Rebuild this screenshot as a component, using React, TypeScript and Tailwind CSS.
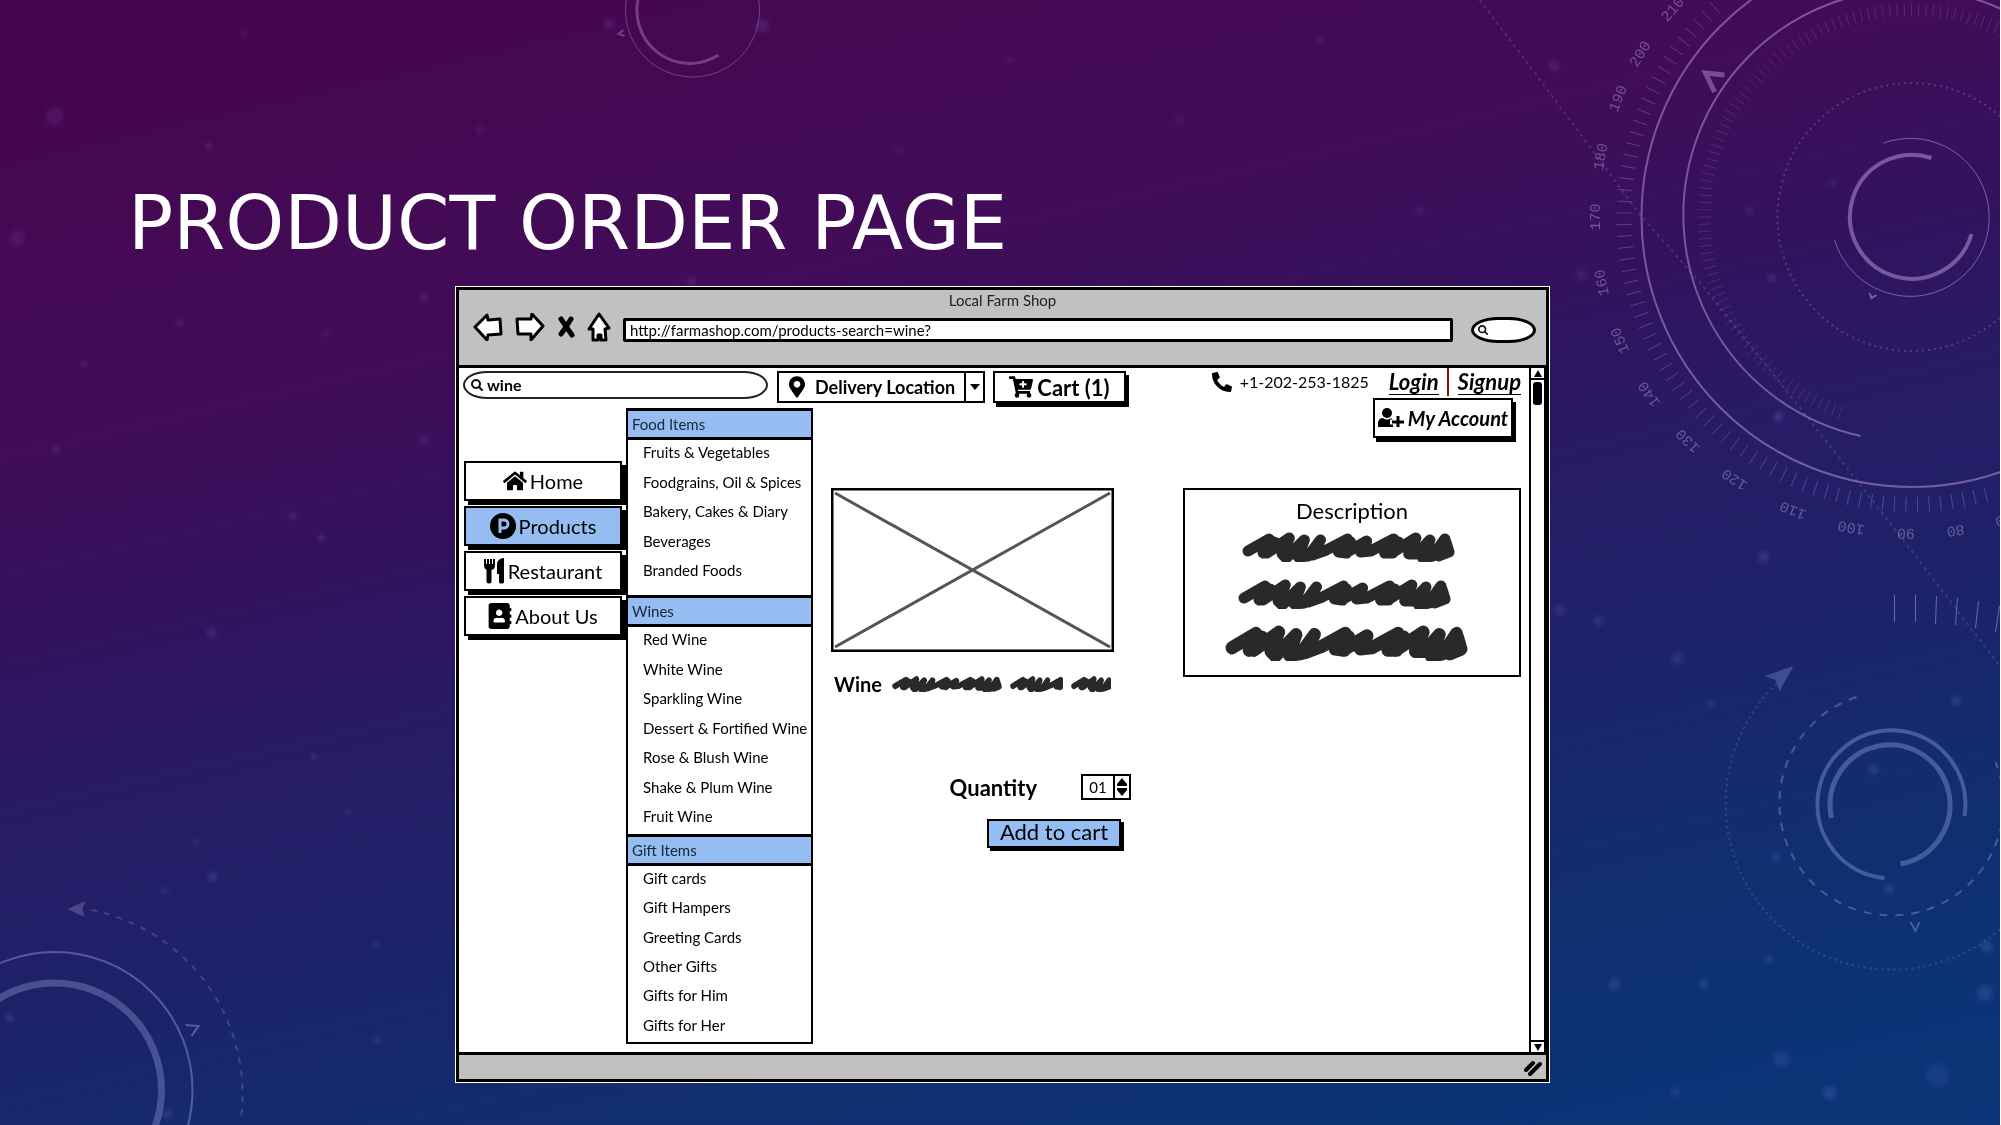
import type { ReactNode } from 'react';
import { FaAddressBook, FaCartPlus, FaHome, FaMapMarkerAlt, FaPhoneAlt } from 'react-icons/fa';

interface MenuSection {
  title: string;
  items: string[];
  listClass: string;
}

const MENU: MenuSection[] = [
  {
    title: 'Food Items',
    items: ['Fruits & Vegetables', 'Foodgrains, Oil & Spices', 'Bakery, Cakes & Diary', 'Beverages', 'Branded Foods'],
    listClass: 'h-[148px] mb-[7px]',
  },
  {
    title: 'Wines',
    items: ['Red Wine', 'White Wine', 'Sparkling Wine', 'Dessert & Fortified Wine', 'Rose & Blush Wine', 'Shake & Plum Wine', 'Fruit Wine'],
    listClass: 'h-[207px]',
  },
  {
    title: 'Gift Items',
    items: ['Gift cards', 'Gift Hampers', 'Greeting Cards', 'Other Gifts', 'Gifts for Him', 'Gifts for Her'],
    listClass: 'h-[176px]',
  },
];

// label + angle on the big dial
const DIAL_LABELS: [string, number][] = [
  ['210', 221], ['200', 211], ['190', 202], ['180', 191], ['170', 180], ['160', 168], ['150', 157],
  ['140', 146], ['130', 135], ['120', 124], ['110', 112], ['100', 101], ['90', 91], ['80', 82], ['70', 73],
];

// x, y, radius, opacity
const STARS: [number, number, number, number][] = [
  [55, 116, 9, 0.1], [18, 238, 8, 0.1], [244, 33, 3, 0.14], [210, 146, 4, 0.14], [180, 323, 3, 0.18],
  [84, 364, 3, 0.16], [327, 333, 3, 0.14], [425, 298, 4, 0.14], [425, 440, 5, 0.12], [293, 516, 3, 0.22],
  [322, 538, 3, 0.24], [212, 633, 5, 0.14], [314, 757, 3, 0.18], [348, 812, 3, 0.14], [196, 842, 3, 0.16],
  [213, 877, 5, 0.16], [376, 945, 3, 0.16], [378, 1041, 3, 0.2], [165, 891, 4, 0.12], [10, 1018, 4, 0.18],
  [168, 1114, 5, 0.16], [57, 450, 4, 0.12], [610, 24, 5, 0.14], [763, 26, 7, 0.14], [692, 282, 4, 0.16],
  [1010, 60, 4, 0.1], [1180, 120, 5, 0.08], [1320, 40, 4, 0.12], [1555, 66, 5, 0.14], [1750, 210, 4, 0.14],
  [1772, 278, 4, 0.18], [1833, 182, 4, 0.1], [1779, 417, 5, 0.22], [1582, 275, 6, 0.1], [1764, 557, 6, 0.16],
  [1678, 659, 6, 0.14], [1711, 703, 4, 0.14], [1560, 610, 6, 0.12], [1599, 621, 5, 0.14], [1957, 701, 5, 0.16],
  [1874, 770, 5, 0.18], [1776, 858, 5, 0.14], [1890, 889, 5, 0.18], [1987, 946, 6, 0.18], [1770, 959, 4, 0.16],
  [1615, 984, 6, 0.16], [1704, 984, 5, 0.16], [1782, 1059, 8, 0.14], [1830, 1093, 7, 0.16], [1938, 1075, 12, 0.1],
  [1985, 993, 8, 0.16], [1676, 1092, 4, 0.16], [900, 150, 5, 0.08], [480, 130, 4, 0.1], [1420, 210, 5, 0.08],
];

function polar(cx: number, cy: number, r: number, deg: number) {
  const a = (deg * Math.PI) / 180;
  return [cx + r * Math.cos(a), cy + r * Math.sin(a)];
}

function Ticks({ r1, r2, from, to, step }: { r1: number; r2: number; from: number; to: number; step: number }) {
  const count = Math.floor((to - from) / step) + 1;
  return (
    <>
      {Array.from({ length: count }, (_, i) => {
        const [x1, y1] = polar(1912, 217, r1, from + i * step);
        const [x2, y2] = polar(1912, 217, r2, from + i * step);
        return <line key={i} x1={x1} y1={y1} x2={x2} y2={y2} />;
      })}
    </>
  );
}

function Backdrop() {
  return (
    <svg
      className="absolute inset-0 w-full h-full"
      viewBox="0 0 2001 1125"
      preserveAspectRatio="xMidYMid slice"
      fill="none"
      aria-hidden="true"
    >
      <defs>
        <filter id="soft" x="-100%" y="-100%" width="300%" height="300%">
          <feGaussianBlur stdDeviation="2" />
        </filter>
      </defs>
      {STARS.map(([x, y, r, o]) => (
        <circle key={`${x}-${y}`} cx={x} cy={y} r={r} fill="#8f8bf0" opacity={o} filter="url(#soft)" />
      ))}

      {/* top centre */}
      <g stroke="#c08bd0" opacity="0.4">
        <circle cx="693" cy="10" r="67" strokeWidth="1" />
        <path d="M640 -6A53 53 0 0 0 719 55" strokeWidth="3" />
        <path d="M624 30L619 34L625 36" strokeWidth="2" />
      </g>

      {/* top right dial */}
      <g stroke="#b48fd6">
        <circle cx="1912" cy="217" r="270" strokeWidth="2" opacity="0.55" />
        <path d="M1861 436A226 226 0 1 1 2020 18" strokeWidth="2" opacity="0.55" />
        <g strokeWidth="1" opacity="0.35">
          <Ticks r1={280} r2={295} from={75} to={228} step={2.3} />
        </g>
        <g strokeWidth="1" opacity="0.2">
          <Ticks r1={201} r2={214} from={110} to={300} step={2} />
        </g>
        <circle cx="1912" cy="217" r="134" strokeWidth="2" strokeDasharray="2 4" opacity="0.3" />
        <path d="M1932 158A62 62 0 1 0 1972 234" strokeWidth="4" opacity="0.55" />
        <path d="M1884 143A79 79 0 1 1 1835 240" strokeWidth="1" opacity="0.6" />
        <path d="M1725 75L1706 73L1715 92" strokeWidth="5" opacity="0.5" />
        <path d="M1870 293L1872 298L1877 295" strokeWidth="2" opacity="0.6" />
        <path d="M1480 0L1540 79L1640 214L1700 282L1807 416L1917 557L2001 667" strokeWidth="2" strokeDasharray="3 4" opacity="0.22" />
        <path d="M1895 595v27M1916 595v27M1937 596l-1 28M1958 598l-2 27M1979 601l-3 27M2000 606l-4 26" strokeWidth="1" opacity="0.6" />
      </g>
      <g fill="#b7a4dd" opacity="0.45" fontFamily="'Liberation Mono', monospace" fontSize="15" textAnchor="middle">
        {DIAL_LABELS.map(([label, deg]) => {
          const [x, y] = polar(1912, 217, 312, deg);
          return (
            <text key={label} transform={`translate(${x} ${y}) rotate(${deg + 90})`}>
              {label}
            </text>
          );
        })}
      </g>

      {/* bottom right */}
      <g stroke="#8fa3dc" opacity="0.4">
        <path d="M1965 816A74 74 0 1 0 1885 878" strokeWidth="4" />
        <path d="M1832 818A60 60 0 1 1 1901 864" strokeWidth="5" />
        <path d="M1857 697A112 112 0 1 0 1996 762" strokeWidth="2" strokeDasharray="8 8" />
        <path d="M1777 684A166 166 0 1 0 2040 879" strokeWidth="2" strokeDasharray="2 4" opacity="0.6" />
        <path d="M1911 922L1916 931L1920 922" strokeWidth="2" />
        <path d="M1794 666L1765 676L1776 680L1780 691Z" fill="#8fa3dc" stroke="none" opacity="0.8" />
      </g>

      {/* bottom left */}
      <g stroke="#8b93d0" opacity="0.5">
        <circle cx="55" cy="1090" r="138" strokeWidth="2" />
        <circle cx="55" cy="1090" r="107" strokeWidth="7" opacity="0.8" />
        <path d="M92 910A188 188 0 0 1 241 1122" strokeWidth="2" strokeDasharray="6 7" opacity="0.6" />
        <path d="M186 1025L199 1026L192 1036" strokeWidth="2" />
        <path d="M68 909L86 901L83 909L85 917Z" fill="#8b7fc4" stroke="none" opacity="0.8" />
      </g>
    </svg>
  );
}

// placeholder text line, `span` is how much of the 212 unit long stroke is shown
function Scribble({ className, span = 212 }: { className: string; span?: number }) {
  return (
    <svg className={className} viewBox={`0 0 ${span} 30`} preserveAspectRatio="none" fill="none" aria-hidden="true">
      <path
        d="M6 19L27 7L21 21L32 10L25 21L47 6L40 22L44 26L62 8L56 25L66 24L78 8L70 23L84 18L105 7L96 20L104 21L108 10L103 21L124 9L118 20L128 19L151 7L142 21L150 21L156 10L149 21L173 6L166 22L174 22L187 8L180 26L190 24L202 7L196 24L206 20L203 10"
        stroke="#292929"
        strokeWidth="11"
        strokeLinecap="round"
        strokeLinejoin="round"
      />
    </svg>
  );
}

function SearchIcon({ className }: { className: string }) {
  return (
    <svg className={className} viewBox="0 0 12 14" fill="none" stroke="#111" strokeWidth="2" strokeLinecap="round">
      <circle cx="5" cy="6" r="4" />
      <path d="M8 9L11 12" />
    </svg>
  );
}

function ParkingIcon() {
  return (
    <svg className="w-[26px] h-[26px]" viewBox="0 0 26 26" fill="none">
      <circle cx="13" cy="13" r="13" fill="#000" />
      <path d="M10 20V7h4a4 4 0 0 1 0 8h-4" stroke="#96bdf2" strokeWidth="3" />
    </svg>
  );
}

function CutleryIcon() {
  return (
    <svg className="w-[21px] h-[26px]" viewBox="0 0 21 26" fill="none" stroke="#000">
      <path d="M1 1v6M4 1v6M7 1v6M10 1v6" strokeWidth="2" />
      <path d="M0 6h11c0 4-1 5-3 6H3C1 11 0 10 0 6z" fill="#000" stroke="none" />
      <path d="M5 11v12" strokeWidth="5" strokeLinecap="round" />
      <path d="M20 0v24c0 2-5 2-5 0v-8h-2V6c0-3 3-6 7-6z" fill="#000" stroke="none" />
    </svg>
  );
}

function UserPlusIcon() {
  return (
    <svg className="w-[26px] h-5 shrink-0" viewBox="0 0 26 20">
      <circle cx="9" cy="5" r="5" />
      <path d="M0 19v-3c0-4 2-6 5-6 3 2 5 2 8 0l2 2v7z" />
      <path d="M20 7v13M12 14h14" stroke="#fff" strokeWidth="5" />
      <path d="M20 8v11M14 14h12" stroke="#000" strokeWidth="3" />
    </svg>
  );
}

function NavButton({ icon, label, active }: { icon: ReactNode; label: string; active?: boolean }) {
  return (
    <button
      type="button"
      className={
        active
          ? 'flex items-center justify-center gap-[3px] h-10 w-full border-2 border-black bg-[#96bdf2] shadow-[4px_4px_0_#000] text-xl'
          : 'flex items-center justify-center gap-[3px] h-10 w-full border-2 border-black bg-white shadow-[4px_4px_0_#000] text-xl'
      }
    >
      {icon}
      {label}
    </button>
  );
}

function BrowserBar() {
  return (
    <header className="bg-[#c1c1c1] border-b-3 border-black pb-[23px]">
      <h2 className="text-center text-[15px] leading-5 text-[#222]">Local Farm Shop</h2>
      <div className="flex items-center gap-3 mt-[2px] h-[30px] pl-[14px] pr-[10px]">
        <button type="button" aria-label="Back">
          <svg className="w-[30px] h-7" viewBox="0 0 30 28" fill="#fff" stroke="#000" strokeWidth="3" strokeLinejoin="round">
            <path d="M2 14L14 2L15 7L27 6L28 21L15 22L14 27Z" />
          </svg>
        </button>
        <button type="button" aria-label="Forward">
          <svg className="w-[30px] h-7" viewBox="0 0 30 28" fill="#fff" stroke="#000" strokeWidth="3" strokeLinejoin="round">
            <path d="M28 13L17 1L16 6L2 6L3 21L16 21L16 27Z" />
          </svg>
        </button>
        <button type="button" aria-label="Stop">
          <svg className="w-[18px] h-[22px]" viewBox="0 0 18 22" stroke="#000" strokeWidth="5" strokeLinecap="round">
            <path d="M4 3L15 19M14 3Q10 10 4 18" fill="none" />
          </svg>
        </button>
        <button type="button" aria-label="Home page">
          <svg className="w-6 h-[30px]" viewBox="0 0 24 30" fill="#fff" stroke="#000" strokeWidth="3" strokeLinejoin="round">
            <path d="M12 2L22 16L18 17L19 28L14 28L14 23L11 23L11 28L6 28L6 17L2 17Z" />
          </svg>
        </button>
        <input
          aria-label="Address"
          defaultValue="http://farmashop.com/products-search=wine?"
          className="flex-1 min-w-0 h-6 px-1 mt-[6px] rounded-xs border-3 border-black bg-white text-[15px] leading-4"
        />
        <label className="flex items-center ml-[6px] mt-[6px] w-[65px] h-[26px] px-1 rounded-[50%/60%] border-3 border-black bg-white">
          <SearchIcon className="w-[10px] h-3 shrink-0" />
          <input aria-label="Browser search" className="w-full min-w-0 outline-none" />
        </label>
      </div>
    </header>
  );
}

function Toolbar() {
  return (
    <div className="flex items-start">
      <label className="flex items-center gap-1 w-[305px] h-7 px-[6px] rounded-[24px/14px] border-2 border-[#222]">
        <SearchIcon className="w-3 h-[14px] shrink-0" />
        <input aria-label="Search products" defaultValue="wine" className="flex-1 min-w-0 text-base leading-5 font-bold outline-none" />
      </label>
      <label className="flex items-center ml-[9px] w-[208px] h-8 pl-[10px] border-2 border-black">
        <FaMapMarkerAlt className="w-4 h-[22px] shrink-0" />
        <select
          aria-label="Delivery location"
          className="appearance-none flex-1 min-w-0 h-full pl-[10px] text-lg leading-6 font-bold outline-none"
        >
          <option>Delivery Location</option>
        </select>
        <span className="flex items-center justify-center w-[19px] h-full border-l-2 border-black pointer-events-none">
          <svg className="w-[10px] h-[6px]" viewBox="0 0 10 6">
            <path d="M0 0h10L5 6z" />
          </svg>
        </span>
      </label>
      <button
        type="button"
        className="flex items-center justify-center gap-1 ml-2 w-[133px] h-8 border-2 border-black shadow-[3px_4px_0_#000] text-[22px] font-bold"
      >
        <FaCartPlus className="w-6 h-[22px]" />
        Cart (1)
      </button>
    </div>
  );
}

function CategoryMenu() {
  return (
    <nav aria-label="Categories" className="w-[187px] border-x-2 border-b-2 border-black text-[15px]">
      {MENU.map((section) => (
        <section key={section.title}>
          <h3 className="flex items-center h-8 px-1 border-y-3 border-black bg-[#96bdf2] text-[#16263d]">{section.title}</h3>
          <ul className={`grid auto-rows-fr pl-[15px] ${section.listClass}`}>
            {section.items.map((item) => (
              <li key={item}>
                <a href="#" className="block whitespace-nowrap leading-6">
                  {item}
                </a>
              </li>
            ))}
          </ul>
        </section>
      ))}
    </nav>
  );
}

function ProductPanel() {
  return (
    <section className="flex flex-col ml-[18px] pt-20 w-[300px]">
      <svg className="w-[283px] h-[164px]" viewBox="0 0 283 164" fill="none" role="img" aria-label="Product picture">
        <rect x="1" y="1" width="281" height="162" stroke="#000" strokeWidth="3" />
        <path d="M4 5L279 159M279 5L4 159" stroke="#555" strokeWidth="3" />
      </svg>
      <div className="flex items-center mt-[22px] h-5 pl-[3px]">
        <span className="text-xl font-bold">Wine</span>
        <Scribble className="ml-[10px] w-[110px] h-4" />
        <Scribble className="ml-2 w-[53px] h-4" span={110} />
        <Scribble className="ml-2 w-10 h-4" span={82} />
      </div>
      <div className="flex items-center justify-end gap-11 h-[26px] mt-20">
        <label htmlFor="quantity" className="text-[22px] font-bold">
          Quantity
        </label>
        <div className="flex w-[50px] h-[26px] border-2 border-black">
          <input id="quantity" defaultValue="01" className="flex-1 min-w-0 text-center text-[15px] outline-none" />
          <div className="flex flex-col items-center justify-center gap-[2px] w-4 border-l-2 border-black">
            <button type="button" aria-label="More">
              <svg className="w-[10px] h-2" viewBox="0 0 10 8">
                <path d="M5 0L10 6V8H0V6z" />
              </svg>
            </button>
            <button type="button" aria-label="Less">
              <svg className="w-[10px] h-2" viewBox="0 0 10 8">
                <path d="M5 8L10 2V0H0V2z" />
              </svg>
            </button>
          </div>
        </div>
      </div>
      <button
        type="button"
        className="self-end flex items-center justify-center mt-[19px] mr-[10px] w-[134px] h-[29px] pb-1 border-2 border-black bg-[#96bdf2] shadow-[3px_3px_0_#000] text-[22px] leading-6"
      >
        Add to cart
      </button>
    </section>
  );
}

function AccountColumn() {
  return (
    <aside className="flex flex-col items-end w-[338px] mr-2 pt-px">
      <div className="flex items-center h-[26px]">
        <FaPhoneAlt className="w-5 h-5" />
        <a href="tel:+12022531825" className="ml-2 text-base">
          +1-202-253-1825
        </a>
        <a href="#" className="ml-5 text-[22px] leading-6 font-bold italic border-b border-black">
          Login
        </a>
        <span className="ml-2 w-[2px] h-7 bg-[#8c1418]" />
        <a href="#" className="ml-[9px] text-[22px] leading-6 font-bold italic border-b border-black">
          Signup
        </a>
      </div>
      <button
        type="button"
        className="flex items-center justify-center gap-1 mt-[3px] mr-2 w-[140px] h-10 border-2 border-black bg-white shadow-[3px_4px_0_#000] text-xl font-bold italic"
      >
        <UserPlusIcon />
        My Account
      </button>
      <section className="flex flex-col items-center mt-[50px] w-full h-[189px] border-2 border-black pt-[7px]">
        <h3 className="text-[22px] leading-7">Description</h3>
        <Scribble className="mt-[7px] mr-2 w-[213px] h-[30px]" />
        <Scribble className="mt-[17px] mr-4 w-[213px] h-[30px]" />
        <Scribble className="mt-4 mr-3 w-[243px] h-9" />
      </section>
    </aside>
  );
}

function ScrollBar() {
  return (
    <div className="flex flex-col items-center w-[17px] border-x-2 border-black">
      <button type="button" aria-label="Scroll up" className="flex items-center justify-center w-full h-3 border-b-2 border-black">
        <svg className="w-2 h-[7px]" viewBox="0 0 8 7">
          <path d="M4 0L8 7H0z" />
        </svg>
      </button>
      <span className="mt-[2px] w-[9px] h-[23px] rounded-[3px] bg-black" />
      <button
        type="button"
        aria-label="Scroll down"
        className="flex items-center justify-center mt-auto w-full h-3 border-t-2 border-black"
      >
        <svg className="w-2 h-[7px]" viewBox="0 0 8 7">
          <path d="M0 0H8L4 7z" />
        </svg>
      </button>
    </div>
  );
}

export default function App() {
  return (
    <div className="relative min-h-screen overflow-hidden border-r border-white bg-[linear-gradient(167deg,#46044f_0%,#440a55_19%,#410c58_29%,#31135e_42%,#271c66_53%,#1b2369_66%,#122d6e_77%,#0c3276_90%,#0b3578_100%)]">
      <Backdrop />
      <div className="relative">
        <div className="flex items-end h-[286px] pl-32 pb-[23px]">
          <h1 className="font-['DejaVu_Sans',sans-serif] text-[75px] leading-[80px] text-white">PRODUCT ORDER PAGE</h1>
        </div>
        <div className="grid grid-cols-[455fr_1095fr_450fr]">
          <div className="col-start-2 border border-white bg-white font-[Lato,'Liberation_Sans',sans-serif] text-black">
            <div className="border-3 border-black">
              <BrowserBar />
              <div className="flex">
                <main className="flex-1 min-w-0 pt-[3px] pb-2 pl-1">
                  <Toolbar />
                  <div className="flex mt-[5px]">
                    <div className="flex flex-col gap-[5px] pt-[53px] pl-px pr-1 w-[163px]">
                      <NavButton icon={<FaHome className="w-6 h-[22px]" />} label="Home" />
                      <NavButton icon={<ParkingIcon />} label="Products" active />
                      <NavButton icon={<CutleryIcon />} label="Restaurant" />
                      <NavButton icon={<FaAddressBook className="w-6 h-[26px]" />} label="About Us" />
                    </div>
                    <CategoryMenu />
                    <ProductPanel />
                  </div>
                </main>
                <AccountColumn />
                <ScrollBar />
              </div>
              <footer className="flex items-end justify-end h-[27px] pr-1 pb-[3px] border-t-3 border-black bg-[#c1c1c1]">
                <svg className="w-[18px] h-4" viewBox="0 0 18 16" stroke="#000" strokeWidth="4" strokeLinecap="round">
                  <path d="M2 10L9 3M6 14L16 4" />
                </svg>
              </footer>
            </div>
          </div>
        </div>
      </div>
    </div>
  );
}
